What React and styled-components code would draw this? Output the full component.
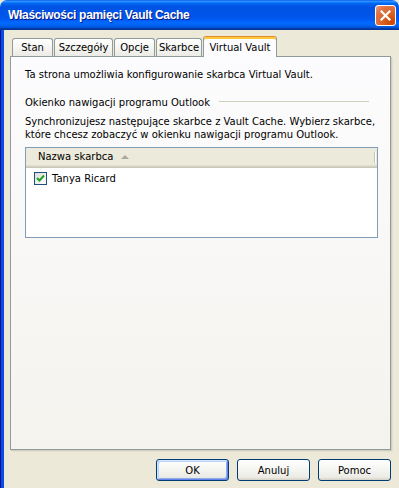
import React from "react";
import styled, { createGlobalStyle } from "styled-components";

const GlobalStyle = createGlobalStyle`
  html, body {
    margin: 0;
    padding: 0;
    background: #ece9d8;
  }
`;

// okno dialogowe w stylu XP
const Frame = styled.div`
  width: 399px;
  height: 488px;
  display: flex;
  flex-direction: column;
  overflow: hidden;
  font-family: "DejaVu Sans", "Liberation Sans", sans-serif;
  font-size: 10px;
  color: #000;
`;

const TitleBar = styled.div`
  height: 30px;
  flex: none;
  display: flex;
  align-items: center;
  padding: 0 3px 0 8px;
  border-radius: 7px 7px 0 0;
  background: linear-gradient(
    to bottom,
    #0058ee 0%,
    #3593ff 4%,
    #288eff 6%,
    #127dff 8%,
    #036ffc 10%,
    #0262ee 14%,
    #0057e5 20%,
    #0054e3 24%,
    #0055eb 56%,
    #005bf5 66%,
    #026afe 76%,
    #0062ef 86%,
    #0052d6 92%,
    #0040ab 94%,
    #003092 100%
  );
`;

const Title = styled.span`
  color: #fff;
  font-family: "Liberation Sans", Arial, sans-serif;
  font-weight: bold;
  font-size: 12px;
  letter-spacing: -0.3px;
  text-shadow: 1px 1px 0 #0a1883;
`;

const CloseButton = styled.div`
  margin-left: auto;
  width: 19px;
  height: 19px;
  border: 1px solid #fff;
  border-radius: 3px;
  display: flex;
  align-items: center;
  justify-content: center;
  background: radial-gradient(
    circle at 85% 85%,
    #cc4600 0%,
    #dc6527 45%,
    #e2744a 75%,
    #f0a088 100%
  );
`;

const Body = styled.div`
  flex: 1;
  display: flex;
  flex-direction: column;
  padding: 6px 8px 0 10px;
  background: linear-gradient(
    to right,
    #00138c 0,
    #00138c 1px,
    #0a4be8 1px,
    #0a4be8 4px,
    #ece9d8 4px
  );
`;

const TabStrip = styled.div`
  height: 20px;
  display: flex;
  align-items: flex-end;
  padding-left: 2px;
  position: relative;
  z-index: 1;
`;

const Tab = styled.div`
  box-sizing: border-box;
  width: ${(p) => p.$w}px;
  height: ${(p) => (p.$active ? "21px" : "18px")};
  margin-bottom: ${(p) => (p.$active ? "-1px" : "0")};
  margin-right: 1px;
  display: flex;
  align-items: center;
  justify-content: center;
  padding-top: ${(p) => (p.$active ? "1px" : "0")};
  border: 1px solid #919b9c;
  border-bottom: none;
  border-top-color: ${(p) => (p.$active ? "#e68b2c" : "#919b9c")};
  border-radius: 3px 3px 0 0;
  background: ${(p) =>
    p.$active ? "#fcfcfe" : "linear-gradient(to bottom, #ffffff, #f3f3ef 60%, #ecebe6)"};
  box-shadow: ${(p) => (p.$active ? "inset 0 2px 0 #ffc83c" : "none")};
  white-space: nowrap;
`;

const Panel = styled.div`
  box-sizing: border-box;
  height: 394px;
  padding: 11px 12px 0 14px;
  border: 1px solid #919b9c;
  background: linear-gradient(to bottom, #fcfcfe, #f4f3ee);
  box-shadow: 1px 1px 0 #d0cebf, 2px 2px 0 #e3e0d0;
`;

const Paragraph = styled.div`
  line-height: 13px;
  white-space: nowrap;
  margin-bottom: ${(p) => p.$gap || 0}px;
`;

const GroupRow = styled.div`
  display: flex;
  align-items: center;
  height: 13px;
  line-height: 13px;
  margin-bottom: 6px;
`;

const GroupLine = styled.div`
  flex: 1;
  height: 0;
  border-top: 1px solid #d0d0bf;
  margin: -3px 9px 0 9px;
`;

const ListBox = styled.div`
  box-sizing: border-box;
  height: 91px;
  border: 1px solid #7f9db9;
  background: #fff;
`;

const ListHeader = styled.div`
  height: 20px;
  display: flex;
  background: #ebeadb;
  box-shadow: inset 0 -1px 0 #cbc7b8, inset 0 -2px 0 #d6d2c2,
    inset 0 -3px 0 #e2decd;
`;

const HeaderCell = styled.div`
  width: 349px;
  height: 17px;
  display: flex;
  align-items: center;
  gap: 8px;
  padding-left: 12px;
  box-sizing: border-box;
  position: relative;

  &::after {
    content: "";
    position: absolute;
    right: 0;
    top: 4px;
    height: 11px;
    border-right: 1px solid #c7c5b2;
    box-shadow: 1px 0 0 #fff;
  }
`;

const SortArrow = styled.span`
  width: 0;
  height: 0;
  border-left: 4px solid transparent;
  border-right: 4px solid transparent;
  border-bottom: 4px solid #aca899;
`;

const ListRow = styled.div`
  height: 20px;
  display: flex;
  align-items: center;
  padding-left: 8px;
  gap: 5px;
`;

const CheckBox = styled.div`
  box-sizing: border-box;
  width: 13px;
  height: 13px;
  border: 1px solid #1c5180;
  background: linear-gradient(135deg, #dcdcd7, #ffffff);
  display: flex;
  align-items: center;
  justify-content: center;
`;

const ButtonRow = styled.div`
  display: flex;
  justify-content: flex-end;
  gap: 8px;
  margin-top: 9px;
`;

const Button = styled.button`
  box-sizing: border-box;
  width: 73px;
  height: 22px;
  padding: 0;
  border: 1px solid #003c74;
  border-radius: 3px;
  font-family: inherit;
  font-size: 10px;
  color: #000;
  background: linear-gradient(to bottom, #ffffff, #f4f4f0 50%, #ecebe6 86%, #d6d0c5);
  box-shadow: ${(p) =>
    p.$default
      ? "inset 1px 1px 0 #cee7ff, inset -1px -1px 0 #6982ee, inset 2px 2px 0 #bcd4f6, inset -2px -2px 0 #89ade4"
      : "none"};
`;

const tabs = [
  { label: "Stan", w: 41 },
  { label: "Szczegóły", w: 59 },
  { label: "Opcje", w: 41 },
  { label: "Skarbce", w: 46 },
  { label: "Virtual Vault", w: 74, active: true },
];

const App = () => {
  return (
    <>
      <GlobalStyle />
      <Frame>
        <TitleBar>
          <Title>Właściwości pamięci Vault Cache</Title>
          <CloseButton>
            <svg width="11" height="11" viewBox="0 0 11 11">
              <path
                d="M1.5 1.5 L9.5 9.5 M9.5 1.5 L1.5 9.5"
                stroke="#fff"
                strokeWidth="2.2"
                strokeLinecap="square"
              />
            </svg>
          </CloseButton>
        </TitleBar>
        <Body>
          <TabStrip>
            {tabs.map((t) => (
              <Tab key={t.label} $w={t.w} $active={t.active}>
                {t.label}
              </Tab>
            ))}
          </TabStrip>
          <Panel>
            <Paragraph $gap={15}>
              Ta strona umożliwia konfigurowanie skarbca Virtual Vault.
            </Paragraph>
            <GroupRow>
              Okienko nawigacji programu Outlook
              <GroupLine />
            </GroupRow>
            <Paragraph $gap={6}>
              Synchronizujesz następujące skarbce z Vault Cache. Wybierz skarbce,
              <br />
              które chcesz zobaczyć w okienku nawigacji programu Outlook.
            </Paragraph>
            <ListBox>
              <ListHeader>
                <HeaderCell>
                  Nazwa skarbca
                  <SortArrow />
                </HeaderCell>
              </ListHeader>
              <ListRow>
                <CheckBox>
                  <svg width="9" height="9" viewBox="0 0 9 9">
                    <path
                      d="M1 4 L3.5 6.5 L8 1.5"
                      fill="none"
                      stroke="#21a121"
                      strokeWidth="2"
                    />
                  </svg>
                </CheckBox>
                Tanya Ricard
              </ListRow>
            </ListBox>
          </Panel>
          <ButtonRow>
            <Button $default>OK</Button>
            <Button>Anuluj</Button>
            <Button>Pomoc</Button>
          </ButtonRow>
        </Body>
      </Frame>
    </>
  );
};

export default App;
